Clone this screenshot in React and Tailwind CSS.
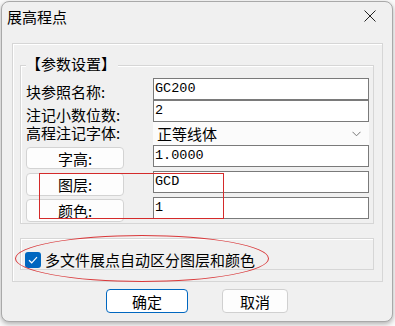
import React from 'react';

const font = { fontFamily: '"Noto Sans CJK SC", "Noto Sans", sans-serif' };

const Field = ({ value }) => (
    <div className="w-[216px] h-full border border-[#7a7a7a] bg-white pl-[1px] flex items-center text-[13.5px] text-black font-['Liberation_Mono',monospace]">
        {value}
    </div>
);

const LabelBtn = ({ text, h }) => (
    <div className={`w-[98px] ${h} mt-[2px] rounded-[4px] border border-[#d3d3d3] bg-[#fdfdfd] flex items-center justify-center text-[15px] leading-none`}>
        {text}
    </div>
);

const App = () => {
    return (
        <div className="w-[395px] h-[326px] bg-[#fafafa] overflow-hidden text-black" style={font}>
            <div className="ml-px mt-px w-[392px] h-[321px] rounded-[8px] border border-[#a9a9a9] bg-[#f0f0f0] shadow-[0_2px_5px_rgba(0,0,0,0.3)] flex flex-col">
                {/* title bar */}
                <div className="h-[28px] flex items-center justify-between pl-[5px] pr-[16px]">
                    <span className="text-[15px] leading-none">展高程点</span>
                    <svg width="12" height="12" viewBox="0 0 12 12">
                        <path d="M0.5 0.5 L11.5 11.5 M11.5 0.5 L0.5 11.5" stroke="#222" strokeWidth="1" fill="none" />
                    </svg>
                </div>

                {/* outer frame */}
                <div className="relative ml-[10px] mt-[13px] w-[371px] h-[239px] border border-[#d6d6d6] shadow-[inset_1px_1px_0_#ffffff]">
                    {/* parameter group */}
                    <div className="relative ml-[7px] mt-[21px] w-[354px] h-[159px] border border-[#d6d6d6] shadow-[inset_1px_1px_0_#ffffff] pt-[12px] pl-[5px]">
                        <span className="absolute left-[5px] -top-[11px] bg-[#f0f0f0] text-[15px] leading-[18px] pr-[2px]">【参数设置】</span>

                        <div className="flex flex-col">
                            <div className="flex h-[22px]">
                                <div className="w-[127px] h-[22px] text-[15px] leading-none pt-[6px] overflow-visible">块参照名称:</div>
                                <Field value="GC200" />
                            </div>
                            <div className="flex h-[22px]">
                                <div className="w-[127px] h-[22px] text-[15px] leading-none pt-[7px] overflow-visible">注记小数位数:</div>
                                <Field value="2" />
                            </div>
                            <div className="flex h-[23px]">
                                <div className="w-[127px] h-[23px] text-[15px] leading-none pt-[3px]">高程注记字体:</div>
                                <div className="w-[216px] h-full bg-[#fbfbfb] flex items-center justify-between pl-[4px] pr-[8px] text-[15px] leading-none">
                                    <span>正等线体</span>
                                    <svg width="9" height="6" viewBox="0 0 9 6">
                                        <path d="M0.5 0.8 L4.5 4.8 L8.5 0.8" stroke="#777" strokeWidth="1" fill="none" />
                                    </svg>
                                </div>
                            </div>
                            <div className="flex h-[22px]">
                                <div className="w-[127px]"><LabelBtn text="字高:" h="h-[22px]" /></div>
                                <Field value="1.0000" />
                            </div>
                            <div className="flex h-[22px] mt-[4px]">
                                <div className="w-[127px]"><LabelBtn text="图层:" h="h-[23px]" /></div>
                                <Field value="GCD" />
                            </div>
                            <div className="flex h-[22px] mt-[4px]">
                                <div className="w-[127px]"><LabelBtn text="颜色:" h="h-[23px]" /></div>
                                <Field value="1" />
                            </div>
                        </div>

                        {/* annotation box */}
                        <div className="absolute left-[18px] top-[107px] w-[185px] h-[46px] border border-[#d42a2a]" />
                    </div>

                    {/* checkbox group */}
                    <div className="ml-[7px] mt-[14px] w-[354px] h-[32px] border border-[#d6d6d6] shadow-[inset_1px_1px_0_#ffffff] pt-[13px] pl-[4px] flex items-start">
                        <div className="w-[16px] h-[16px] rounded-[3px] bg-[#0067c0] flex items-center justify-center">
                            <svg width="10" height="8" viewBox="0 0 10 8">
                                <path d="M1 4.2 L3.7 6.8 L9 1.2" stroke="#fff" strokeWidth="1.2" fill="none" />
                            </svg>
                        </div>
                        <span className="ml-[4px] text-[15px] leading-[16px]">多文件展点自动区分图层和颜色</span>
                    </div>

                    {/* annotation ellipse */}
                    <div className="absolute left-[2px] top-[191px] w-[254px] h-[47px] rounded-[50%] border border-[#d9383a]" />
                </div>

                {/* buttons */}
                <div className="flex mt-[7px] ml-[104px]">
                    <div className="w-[82px] h-[24px] rounded-[4px] border border-[#0067c0] bg-white flex items-center justify-center text-[15px] leading-none">确定</div>
                    <div className="ml-[34px] w-[66px] h-[24px] rounded-[4px] border border-[#d0d0d0] bg-[#fdfdfd] flex items-center justify-center text-[15px] leading-none">取消</div>
                </div>
            </div>
        </div>
    );
};

export default App;
